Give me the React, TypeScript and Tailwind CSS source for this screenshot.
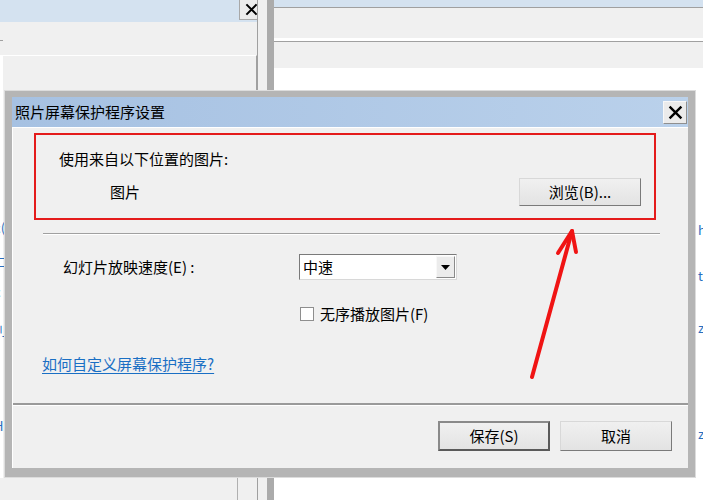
import React from "react";

const font = { fontFamily: '"Noto Sans CJK SC", "Microsoft YaHei", sans-serif' };

function CloseX({ size = 14 }: { size?: number }) {
  return (
    <svg width={size} height={size} viewBox="0 0 14 14">
      <path d="M1.5 1.5 L12.5 12.5 M12.5 1.5 L1.5 12.5" stroke="#000" strokeWidth="2.2" />
    </svg>
  );
}

function WinButton({ children, def = false, className = "" }: { children: React.ReactNode; def?: boolean; className?: string }) {
  return (
    <div
      className={
        "flex items-center justify-center text-[15px] leading-[20px] text-black bg-gradient-to-b from-[#f0f0f0] to-[#e3e3e3] " +
        (def
          ? "border-2 border-t-[#8a8a8a] border-l-[#8a8a8a] border-b-[#5a5a5a] border-r-[#5a5a5a] "
          : "border border-t-[#d8d8d8] border-l-[#d8d8d8] border-b-[#7a7a7a] border-r-[#7a7a7a] ") +
        className
      }
    >
      {children}
    </div>
  );
}

export default function App() {
  return (
    <div className="relative w-[703px] h-[500px] overflow-hidden bg-white" style={font}>
      {/* ===== background windows ===== */}
      {/* left window */}
      <div className="absolute left-0 top-0 w-[267px] h-[500px] bg-[#f0f0f0]">
        <div className="h-[22px] bg-[#d4e2f0] flex justify-end pr-[4px]">
          <div className="w-[24px] h-[20px] bg-[#ececec] border border-[#a8a8a8] border-t-0 flex items-center justify-center">
            <CloseX size={13} />
          </div>
        </div>
        <div className="h-[33px] relative">
          <div className="absolute left-0 top-[18px] w-[3px] h-px bg-[#a0a0a0]" />
        </div>
        <div className="flex h-[423px]">
          <div className="w-[3px] bg-white" />
          <div className="w-[254px] border-t border-white border-r border-r-[#a0a0a0] bg-[#f0f0f0]" />
        </div>
        <div className="flex items-start pl-0 pt-[19px] text-[15px] leading-[20px] text-black whitespace-nowrap">
          在恢复时显示登录屏幕
        </div>
        <div className="absolute left-[237px] top-[470px] w-px h-[30px] bg-[#b0b0b0]" />
      </div>
      {/* left-edge fragments of a window behind */}
      <div className="absolute left-[-6px] top-[220px] flex flex-col text-[13px] leading-[16px] text-[#2a6fc0]">
        <span className="h-[34px]">c(</span>
        <span className="h-[30px]">二</span>
        <span className="h-[38px]">c</span>
        <span className="h-[96px]">刂</span>
        <span>H</span>
      </div>
      {/* vertical divider bar */}
      <div className="absolute left-[257px] top-0 w-[17px] h-[500px] flex">
        <div className="w-px bg-[#a0a0a0]" />
        <div className="w-[9px] bg-[#f0f0f0]" />
        <div className="w-[7px] bg-[#ababab]" />
      </div>
      {/* right window */}
      <div className="absolute left-[274px] top-0 right-0 h-[90px] flex flex-col">
        <div className="h-[7px] bg-[#d4e2f0]" />
        <div className="h-px bg-[#a0a0a0]" />
        <div className="h-[30px] bg-[#f0f0f0]" />
        <div className="h-[3px] bg-white" />
        <div className="h-px bg-[#a0a0a0]" />
        <div className="h-[26px] bg-[#f0f0f0]" />
        <div className="flex-1 bg-white" />
      </div>
      <div className="absolute left-[698px] top-[222px] flex flex-col text-[13px] leading-[16px] text-[#2a6fc0]">
        <span className="h-[46px]">h</span>
        <span className="h-[52px]">t</span>
        <span className="h-[106px]">z</span>
        <span>z</span>
      </div>

      {/* ===== dialog ===== */}
      <div className="absolute left-[4px] top-[90px] w-[692px] h-[388px] border border-[#dcdcdc] bg-[#b5b5b5] px-[7px] pt-[6px] pb-[9px] flex flex-col">
        {/* title bar */}
        <div className="h-[30px] shrink-0 bg-gradient-to-r from-[#a6c1e2] to-[#bad1eb] flex items-center justify-between pl-[3px] pr-[1px]">
          <span className="text-[15px] leading-[20px] text-black">照片屏幕保护程序设置</span>
          <div className="w-[24px] h-[23px] bg-[#ebebeb] border border-t-[#f8f8f8] border-l-[#f8f8f8] border-b-[#8f8f8f] border-r-[#8f8f8f] flex items-center justify-center">
            <CloseX size={15} />
          </div>
        </div>
        {/* content */}
        <div className="flex-1 bg-[#f0f0f0] border-t border-l border-white flex flex-col text-[15px] leading-[20px] text-black">
          {/* red box */}
          <div className="mt-[5px] ml-[21px] w-[622px] h-[87px] border-2 border-[#e41b1b] flex flex-col pt-[14px]">
            <div className="pl-[23px]">使用来自以下位置的图片:</div>
            <div className="mt-[9px] flex items-center justify-between pl-[74px] pr-[13px]">
              <span>图片</span>
              <WinButton className="w-[122px] h-[28px]">浏览(B)...</WinButton>
            </div>
          </div>
          {/* separator */}
          <div className="mt-[13px] ml-[30px] w-[617px] flex flex-col">
            <div className="h-px bg-[#a0a0a0]" />
            <div className="h-px bg-white" />
          </div>
          {/* speed row */}
          <div className="mt-[19px] flex items-center h-[26px]">
            <span className="ml-[50px] w-[236px]">幻灯片放映速度(E) :</span>
            <div className="w-[158px] h-[26px] bg-white border border-t-[#7a7a7a] border-l-[#7a7a7a] border-b-[#d8d8d8] border-r-[#d8d8d8] flex items-center justify-between pl-[3px] pr-[1px]">
              <span>中速</span>
              <div className="w-[19px] h-[22px] bg-[#ececec] border border-t-[#f8f8f8] border-l-[#f8f8f8] border-b-[#8a8a8a] border-r-[#8a8a8a] flex items-center justify-center">
                <svg width="9" height="5" viewBox="0 0 9 5">
                  <path d="M0 0 H9 L4.5 5 Z" fill="#000" />
                </svg>
              </div>
            </div>
          </div>
          {/* checkbox row */}
          <div className="mt-[24px] flex items-center h-[20px] ml-[287px]">
            <div className="w-[14px] h-[14px] bg-white border border-[#8e8e8e]" />
            <span className="ml-[6px]">无序播放图片(F)</span>
          </div>
          {/* link */}
          <div className="mt-[30px] ml-[29px] h-[20px]">
            <span className="text-[#1a6fc4] underline underline-offset-[3px]">如何自定义屏幕保护程序?</span>
          </div>
          {/* bottom separator */}
          <div className="mt-[29px] flex flex-col">
            <div className="h-[2px] bg-[#9a9a9a]" />
            <div className="h-px bg-white" />
          </div>
          {/* buttons */}
          <div className="mt-[15px] flex justify-end gap-[10px] pr-[16px]">
            <WinButton def className="w-[112px] h-[30px]">保存(S)</WinButton>
            <WinButton className="w-[112px] h-[30px]">取消</WinButton>
          </div>
        </div>
      </div>

      {/* ===== red annotation arrow ===== */}
      <svg className="absolute left-0 top-0 pointer-events-none" width="703" height="500" viewBox="0 0 703 500">
        <g stroke="#f01414" strokeWidth="4" strokeLinecap="round" fill="none">
          <path d="M532 377 L572 231" />
          <path d="M558 253 L572 231 L576 252" strokeLinejoin="round" />
        </g>
      </svg>
    </div>
  );
}
